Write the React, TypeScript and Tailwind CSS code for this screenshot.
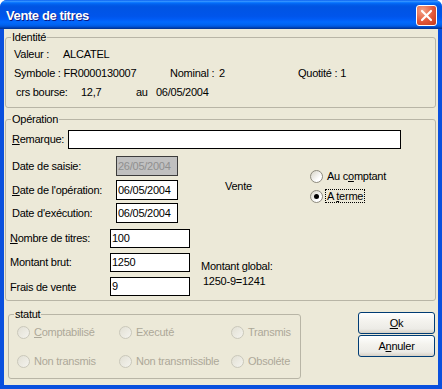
import React from "react";

type BoxProps = { title: string; className?: string; children?: React.ReactNode };

const GroupBox = ({ title, className = "", children }: BoxProps) => (
  <fieldset className={`border border-[#b8b5a6] rounded-[3px] ${className}`}>
    <legend className="ml-[5px] px-[1px] leading-[13px] text-black">{title}</legend>
    {children}
  </fieldset>
);

const TextBox = ({ value, className = "", disabled = false }: { value: string; className?: string; disabled?: boolean }) => (
  <div
    className={`flex items-center border pl-[1px] ${
      disabled ? "border-[#3c3c3c] bg-[#c0c0c0] text-[#8f8f8f]" : "border-black bg-white text-black"
    } ${className}`}
  >
    {value}
  </div>
);

const Radio = ({ checked = false, disabled = false }: { checked?: boolean; disabled?: boolean }) => (
  <span
    className={`flex h-[13px] w-[13px] shrink-0 items-center justify-center rounded-full border ${
      disabled
        ? "border-[#cac8bb] bg-[linear-gradient(135deg,#e2e0d4,#f4f3ee)]"
        : "border-[#8d8a7e] bg-[linear-gradient(135deg,#d6d3c6,#ffffff_70%)]"
    }`}
  >
    {checked && <span className="h-[5px] w-[5px] rounded-full bg-black" />}
  </span>
);

const Key = ({ children }: { children: React.ReactNode }) => (
  <span className="underline underline-offset-[1px]">{children}</span>
);

const XpButton = ({ children }: { children: React.ReactNode }) => (
  <button className="flex h-[22px] w-[77px] items-center justify-center rounded-[3px] border border-[#003c74] bg-[linear-gradient(180deg,#ffffff_0%,#f4f3ee_40%,#ecebe6_80%,#d6d0c5_100%)] text-black">
    {children}
  </button>
);

export default function App() {
  return (
    <div className="flex h-[389px] w-[442px] flex-col overflow-hidden rounded-t-[7px] bg-[#0a50de] font-['Liberation_Sans',Arial,sans-serif] text-[11px] tracking-[-0.25px] text-black">
      {/* title bar */}
      <div className="flex h-[29px] shrink-0 items-center justify-between bg-[linear-gradient(180deg,#0058ee_0%,#3a93ff_4%,#288eff_6%,#127dff_8%,#036ffc_10%,#0262ee_14%,#0057e5_20%,#0054e3_24%,#0055eb_56%,#005bf5_66%,#026afe_76%,#0062ef_86%,#0052d6_92%,#0040ab_96%,#003092_100%)] pl-[6px] pr-[5px]">
        <span className="pt-[2px] text-[13px] font-bold tracking-[-0.4px] text-white [text-shadow:1px_1px_0_#0a1883]">
          Vente de titres
        </span>
        <div className="mt-[2px] flex h-[21px] w-[21px] items-center justify-center rounded-[3px] border border-white bg-[radial-gradient(circle_at_30%_25%,#f4a387,#e2583a_55%,#c2381a)]">
          <svg width="19" height="19" viewBox="0 0 19 19">
            <path d="M5 5 L14 14 M14 5 L5 14" stroke="white" strokeWidth="2.2" strokeLinecap="round" />
          </svg>
        </div>
      </div>

      {/* body */}
      <div className="mx-[4px] mb-[4px] flex flex-1 flex-col bg-[#ece9d8]">
        <GroupBox title="Identité" className="ml-[1px] mt-[2px] w-[431px] pb-[5px] pt-[1px]">
          <div className="flex h-[19px] items-center pl-[8px]">
            <span className="w-[49px]">Valeur :</span>
            <span>ALCATEL</span>
          </div>
          <div className="flex h-[19px] items-center pl-[8px]">
            <span className="w-[156px]">Symbole : FR0000130007</span>
            <span className="w-[49px]">Nominal :</span>
            <span className="w-[79px]">2</span>
            <span>Quotité : 1</span>
          </div>
          <div className="flex h-[19px] items-center pl-[10px]">
            <span className="w-[65px]">crs bourse:</span>
            <span className="w-[55px]">12,7</span>
            <span className="w-[20px]">au</span>
            <span>06/05/2004</span>
          </div>
        </GroupBox>

        <GroupBox title="Opération" className="ml-[1px] mt-[5px] w-[431px] pb-[4px] pt-[4px]">
          <div className="flex items-center pl-[6px]">
            <span className="w-[56px]">
              <Key>R</Key>emarque:
            </span>
            <TextBox value="" className="h-[19px] w-[333px]" />
          </div>

          <div className="mt-[7px] flex pl-[6px]">
            <div className="flex w-[166px] flex-col">
              <div className="flex h-[20px] items-center">
                <span className="w-[104px]">Date de saisie:</span>
                <TextBox value="26/05/2004" disabled className="h-[20px] w-[62px]" />
              </div>
              <div className="mt-[4px] flex h-[20px] items-center">
                <span className="w-[104px]">
                  <Key>D</Key>ate de l'opération:
                </span>
                <TextBox value="06/05/2004" className="h-[20px] w-[62px]" />
              </div>
              <div className="mt-[3px] flex h-[20px] items-center">
                <span className="w-[104px]">Date d'exécution:</span>
                <TextBox value="06/05/2004" className="h-[20px] w-[62px]" />
              </div>
            </div>
            <div className="ml-[47px] mt-[24px] w-[85px] leading-[13px]">Vente</div>
            <div className="mt-[10px] flex flex-col">
              <div className="flex h-[20px] items-center">
                <Radio />
                <span className="ml-[4px]">
                  Au c<Key>o</Key>mptant
                </span>
              </div>
              <div className="flex h-[20px] items-center">
                <Radio checked />
                <span className="ml-[2px] border border-dotted border-black px-[1px] leading-[12px]">
                  A <Key>t</Key>erme
                </span>
              </div>
            </div>
          </div>

          <div className="mt-[6px] flex pl-[4px]">
            <div className="flex flex-col gap-[5px]">
              <div className="flex h-[19px] items-center">
                <span className="w-[100px]">
                  <Key>N</Key>ombre de titres:
                </span>
                <TextBox value="100" className="h-[19px] w-[80px]" />
              </div>
              <div className="flex h-[19px] items-center">
                <span className="w-[100px]">Montant brut:</span>
                <TextBox value="1250" className="h-[19px] w-[80px]" />
              </div>
              <div className="flex h-[19px] items-center">
                <span className="w-[100px] pt-[2px]">Frais de vente</span>
                <TextBox value="9" className="h-[19px] w-[80px]" />
              </div>
            </div>
            <div className="ml-[11px] flex flex-col pt-[31px] leading-[13px]">
              <span>Montant global:</span>
              <span className="ml-[2px] mt-[2px]">1250-9=1241</span>
            </div>
          </div>
        </GroupBox>

        <div className="mt-[7px] flex">
          <GroupBox title="statut" className="ml-[4px] w-[293px] pb-[7px] pt-[1px] text-[#aca899]">
            <div className="flex h-[20px] items-center pl-[8px]">
              <div className="flex w-[102px] items-center gap-[4px]">
                <Radio disabled />
                <span>
                  <Key>C</Key>omptabilisé
                </span>
              </div>
              <div className="flex w-[112px] items-center gap-[4px]">
                <Radio disabled />
                <span>Executé</span>
              </div>
              <div className="flex items-center gap-[4px]">
                <Radio disabled />
                <span>Transmis</span>
              </div>
            </div>
            <div className="mt-[9px] flex h-[20px] items-center pl-[8px]">
              <div className="flex w-[102px] items-center gap-[4px]">
                <Radio disabled />
                <span>Non transmis</span>
              </div>
              <div className="flex w-[112px] items-center gap-[4px]">
                <Radio disabled />
                <span>Non transmissible</span>
              </div>
              <div className="flex items-center gap-[4px]">
                <Radio disabled />
                <span>Obsoléte</span>
              </div>
            </div>
          </GroupBox>

          <div className="ml-[57px] mt-[4px] flex flex-col gap-[1px]">
            <XpButton>
              <Key>O</Key>k
            </XpButton>
            <XpButton>
              A<Key>n</Key>nuler
            </XpButton>
          </div>
        </div>
      </div>
    </div>
  );
}
